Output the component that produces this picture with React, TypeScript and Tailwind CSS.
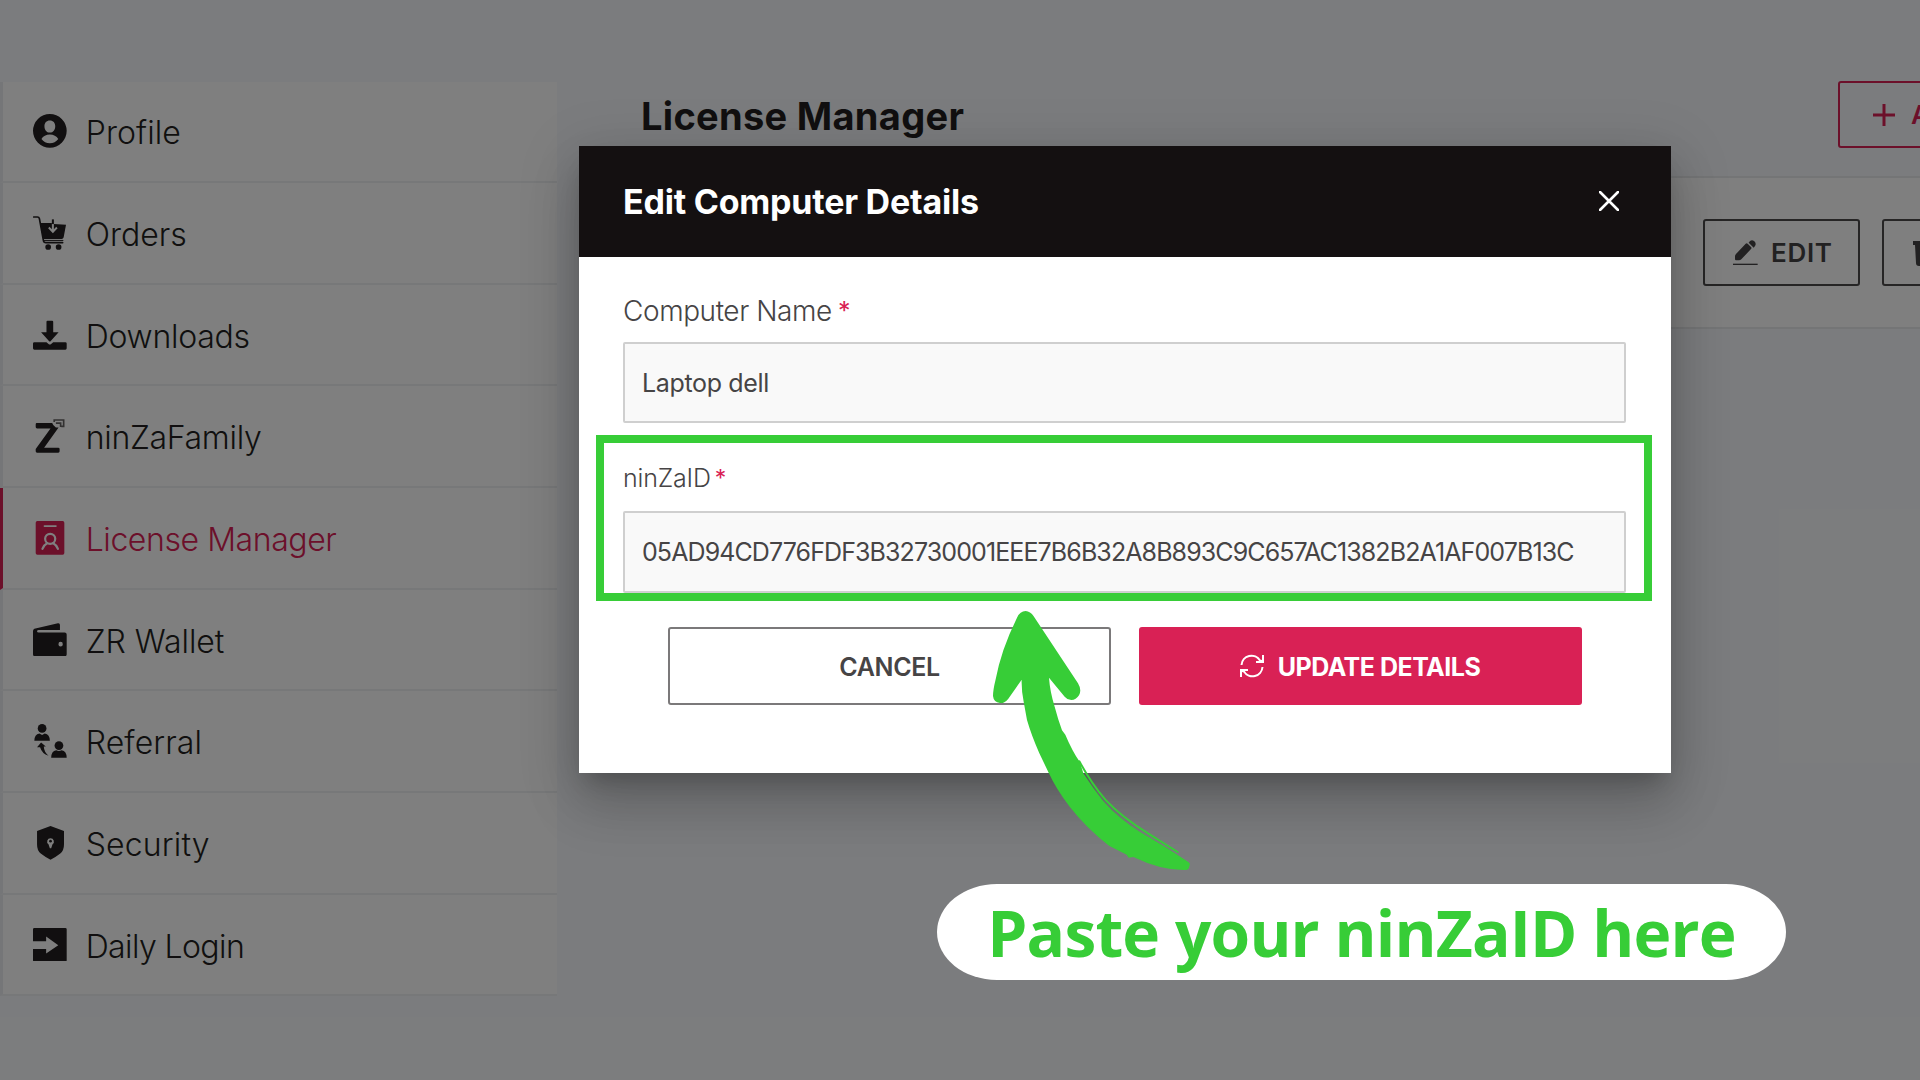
import React from "react";

type IconProps = { className?: string };

const ProfileIcon: React.FC<IconProps> = ({ className }) => (
  <svg viewBox="0 0 100 100" className={className} fill="currentColor">
    <path
      fillRule="evenodd"
      d="M50 0a50 50 0 1 0 0 100a50 50 0 0 0 0-100ZM50 19c10 0 16 7 16 17c0 10-6 19-16 19s-16-9-16-19c0-10 6-17 16-17ZM50 61c11 0 20 5 25 13c-6 8-15 13-25 13s-19-5-25-13c5-8 14-13 25-13Z"
    />
  </svg>
);

const OrdersIcon: React.FC<IconProps> = ({ className }) => (
  <svg viewBox="0 0 100 100" className={className} fill="currentColor">
    <path
      d="M2 3h11q5 0 6 5l12 65q1 6 7 6h50"
      fill="none"
      stroke="currentColor"
      strokeWidth="5"
      strokeLinecap="round"
    />
    <path
      fillRule="evenodd"
      d="M21 21h35v18l-7-7l-4 4l14 15l14-15l-4-4l-7 7V24l36 2l-7 37q-1 5-6 5H30Z"
    />
    <path d="M56 10h6v14h-6z" />
    <path d="M30 71h60v3H30z" />
    <circle cx="45" cy="92" r="8.500" />
    <circle cx="76" cy="92" r="8.500" />
  </svg>
);

const DownloadsIcon: React.FC<IconProps> = ({ className }) => (
  <svg viewBox="0 0 100 100" className={className} fill="currentColor">
    <path d="M43 8h14q3 0 3 3v31h16L52 69q-2 2-4 0L24 42h16V11q0-3 3-3Z" />
    <path d="M4 72h36l7 6q3 2 6 0l7-6h36q4 0 4 4v14q0 4-4 4H4q-4 0-4-4V76q0-4 4-4Z" />
  </svg>
);

const FamilyIcon: React.FC<IconProps> = ({ className }) => (
  <svg viewBox="0 0 100 100" className={className} fill="currentColor">
    <path d="M11 12h46q2 8 11 13h8L33 85h42q4 0 4 4v7q0 4-4 4H12q-4 0-4-4v-7L52 28H12q-4 0-4-4v-8q0-4 3-4Z" />
    <path
      d="M63 9V3h28v19h-7M68 12h14v12"
      fill="none"
      stroke="currentColor"
      strokeWidth="5"
      opacity="0.7"
    />
  </svg>
);

const LicenseIcon: React.FC<IconProps> = ({ className }) => (
  <svg viewBox="0 0 100 100" className={className}>
    <rect x="8" y="0" width="85" height="100" rx="5" fill="currentColor" />
    <g fill="none" stroke="#fff" strokeLinecap="round">
      <path d="M34 15h34" strokeWidth="5" />
      <circle cx="51" cy="53" r="15" strokeWidth="6.500" />
      <path d="M28 83q4-12 14-17M74 83q-4-12-14-17" strokeWidth="6.500" />
    </g>
  </svg>
);

const WalletIcon: React.FC<IconProps> = ({ className }) => (
  <svg viewBox="0 0 100 100" className={className} fill="currentColor">
    <path
      fillRule="evenodd"
      d="M4 17L74 1q6-1 6 5v15H17q-5 0-5 4q0 3 5 3h77q6 0 6 6v59q0 6-6 6H6q-6 0-6-6V24q0-5 4-7ZM82 56a6.500 7 0 1 0 0 14a6.500 7 0 0 0 0-14Z"
    />
  </svg>
);

const ReferralIcon: React.FC<IconProps> = ({ className }) => (
  <svg viewBox="0 0 100 100" className={className} fill="currentColor">
    <circle cx="27" cy="13" r="13" />
    <path d="M4 50q0-20 15-22l8 5l8-5q15 2 15 22Z" />
    <circle cx="77" cy="64" r="13" />
    <path d="M54 100q0-19 15-22q8 4 16 0q15 3 15 22Z" />
    <path d="M24 55l14 12h-6q1 17 14 27q-19-5-25-25H12Z" />
  </svg>
);

const SecurityIcon: React.FC<IconProps> = ({ className }) => (
  <svg viewBox="0 0 100 100" className={className} fill="currentColor">
    <path
      fillRule="evenodd"
      d="M52 0L92 15V55q0 18-11 27Q66 94 52 100Q38 94 23 82Q12 73 12 55V15ZM52 36a10 10 0 0 0-6 18l4 12h4l4-12a10 10 0 0 0-6-18Z"
    />
    <circle cx="52" cy="45" r="4" />
  </svg>
);

const LoginIcon: React.FC<IconProps> = ({ className }) => (
  <svg viewBox="0 0 100 100" className={className} fill="currentColor">
    <path d="M4 0h92q4 0 4 4v92q0 4-4 4H4q-4 0-4-4V62h39v14L75 51L39 25v14H0V4q0-4 4-4Z" />
  </svg>
);

const MENU = [
  { label: "Profile", Icon: ProfileIcon, text: "tracking-[0.1px]" },
  { label: "Orders", Icon: OrdersIcon, text: "tracking-[0px]" },
  { label: "Downloads", Icon: DownloadsIcon, text: "tracking-[-0.25px]" },
  { label: "ninZaFamily", Icon: FamilyIcon, text: "tracking-[-0.3px]" },
  { label: "License Manager", Icon: LicenseIcon, active: true, text: "tracking-[-0.42px]" },
  { label: "ZR Wallet", Icon: WalletIcon, text: "tracking-[-0.05px]" },
  { label: "Referral", Icon: ReferralIcon, text: "tracking-[0.1px]" },
  { label: "Security", Icon: SecurityIcon, text: "tracking-[0.15px]" },
  { label: "Daily Login", Icon: LoginIcon, text: "tracking-[-0.6px]" },
];

const Sidebar: React.FC = () => (
  <nav className="mt-[81.500px] w-[557px] shrink-0">
    {MENU.map(({ label, Icon, active, text }) => (
      <a
        key={label}
        className={`flex h-[101.67px] items-center border-b-2 border-b-[#eff1f3] border-l-[3px] bg-white pl-[30px] ${
          active ? "border-l-[#d92155] text-[#d92155]" : "border-l-[#ebedf0] text-[#231f20]"
        }`}
      >
        <Icon className="size-[33.7px] shrink-0" />
        <span className={`ml-[19px] pt-1 text-[32px] leading-none font-[350] whitespace-nowrap ${text}`}>
          {label}
        </span>
      </a>
    ))}
  </nav>
);

const Content: React.FC = () => (
  <section className="flex w-[1500px] shrink-0 flex-col pt-[81px] pl-[84px]">
    <div className="flex h-[67px] items-center">
      <h1 className="w-[1197px] shrink-0 pt-[3px] text-[38px] leading-none font-bold tracking-[0.3px] text-[#231f20]">
        License Manager
      </h1>
      <button className="flex h-full w-[300px] shrink-0 items-center gap-4 rounded-[3px] border-2 border-[#d92155] pl-[33px] text-[26px] leading-none font-semibold text-[#d92155]">
        <svg viewBox="0 0 22 22" className="size-[22px]" stroke="currentColor" strokeWidth="3">
          <path d="M11 0v22M0 11h22" />
        </svg>
        ADD
      </button>
    </div>
    <div className="mt-[28px] flex h-[153px] w-[1500px] items-center gap-[22px] border-y-2 border-[#e9ebed] bg-white pl-[1062px]">
      <button className="flex h-[67px] w-[157px] shrink-0 items-center rounded-[3px] border-2 border-[#4c4a4b] pl-[28px] text-[#454344]">
        <svg viewBox="0 0 75 75" className="size-[25px]" fill="currentColor">
          <path d="M9 42L38 11q3-3 6 0l10 10q3 3 0 6L25 58q-3 3-7 3h-9q-3 0-3-4v-8q0-4 3-7Z" />
          <path d="M47 8l4-5q6-5 12 0l3 3q4 6 0 12l-4 5Z" />
          <path d="M0 71h74v4H0z" />
        </svg>
        <span className="ml-[13px] pt-px text-[26px] leading-none font-semibold tracking-[0.7px]">EDIT</span>
      </button>
      <button className="flex h-[67px] w-[190px] shrink-0 items-center rounded-[3px] border-2 border-[#4c4a4b] pl-[29px] text-[#454344]">
        <svg viewBox="0 0 24 27" className="w-[24px]" fill="currentColor">
          <path d="M0 2h7V0h10v2h7v4h-2l-1 18q0 3-3 3H6q-3 0-3-3L2 6H0Z" />
        </svg>
      </button>
    </div>
  </section>
);

const EditDialog: React.FC = () => (
  <div
    role="dialog"
    className="absolute top-[145.500px] left-[579px] h-[627px] w-[1092px] bg-white text-[#464445] shadow-[0_15px_21px_-9px_rgba(0,0,0,0.2),0_33px_50px_2px_rgba(0,0,0,0.14),0_12px_54px_8px_rgba(0,0,0,0.12)]"
  >
    <header className="flex h-[111px] items-center justify-between bg-[#141011] pr-[52px] pl-[44px] text-white">
      <h2 className="pt-0.5 text-[34px] leading-none font-bold tracking-[-0.22px]">
        Edit Computer Details
      </h2>
      <svg viewBox="0 0 20 20" className="size-[20px]" stroke="currentColor" strokeWidth="2.600" strokeLinecap="round">
        <path d="M1 1l18 18M19 1L1 19" />
      </svg>
    </header>
    <div className="flex flex-col px-[44px] pt-[34px]">
      <label className="flex h-10 gap-1.5 text-[28px] leading-10 font-[360] tracking-[-0.42px]">
        Computer Name <span className="text-[25px] font-normal text-[#d92155]">*</span>
      </label>
      <div className="mt-[11px] mr-px flex h-[81px] items-center rounded-[2px] border-2 border-[#cfcfcf] bg-[#f9f9f9] pt-0.5 pl-[17px] text-[25px] leading-none font-[370] tracking-[-0.35px]">
        Laptop dell
      </div>
      <label className="mt-[35px] flex h-10 gap-1 text-[25px] leading-10 font-[360] tracking-[-0.2px]">
        ninZaID <span className="text-[23px] font-normal text-[#d92155]">*</span>
      </label>
      <div className="mt-[13px] mr-px flex h-[82.500px] items-center rounded-[2px] border-2 border-[#cfcfcf] bg-[#f9f9f9] pt-0.5 pl-[17px] text-[25px] leading-none font-[370] tracking-[-0.9px]">
        05AD94CD776FDF3B32730001EEE7B6B32A8B893C9C657AC1382B2A1AF007B13C
      </div>
      <div className="mt-[34px] flex gap-[27.500px] pl-[45px]">
        <button className="flex h-[78px] w-[443px] shrink-0 items-center justify-center rounded-[3px] border-2 border-[#7b797a] pt-0.5 text-[25px] leading-none font-semibold tracking-[-0.35px]">
          CANCEL
        </button>
        <button className="flex h-[78px] w-[443px] shrink-0 items-center justify-center gap-[14px] rounded-[3px] bg-[#d92155] text-[25px] leading-none font-bold tracking-[-0.5px] text-white">
          <svg viewBox="0 0 24 24" className="size-[24px]" fill="none" stroke="currentColor" strokeWidth="2">
            <path d="M1.500 11A10 10 0 0 1 20 6.500L23 7.500M23 1v7h-7M22.500 13A10 10 0 0 1 4 17.500L1 16.500M1 23v-7h7" />
          </svg>
          <span className="pt-0.5">UPDATE DETAILS</span>
        </button>
      </div>
    </div>
  </div>
);

const Arrow: React.FC = () => (
  <svg viewBox="0 0 900 900" className="absolute top-[590px] left-[920px] size-[300px]" fill="#37cd37">
    <path d="M291 83Q300 63 317 63Q331 64 341 79L474 280Q486 300 477 316Q468 330 454 330Q441 329 434 320L387 263Q390 305 404 350Q414 388 426 421L436 434Q456 482 480 517L490 550Q520 597 550 634Q595 685 660 726Q740 772 806 817Q812 822 808 828Q807 840 797 840Q725 842 640 801L626 803L620 794L567 767Q500 715 449 650Q408 596 386 548L358 490Q334 435 321 390L311 335Q304 300 305 269L265 326Q253 341 240 339Q221 337 219 318Q219 300 226 272Q243 180 291 83Z" />
    <path
      d="M478 514Q514 580 556 629Q605 682 690 734L773 786"
      fill="none"
      stroke="#37cd37"
      strokeWidth="6"
      strokeLinecap="round"
    />
  </svg>
);

export default function App() {
  return (
    <main className="relative flex h-[1080px] w-[1920px] overflow-hidden bg-[#f7f9fc] font-['Inter',sans-serif]">
      <Sidebar />
      <Content />

      {/* Backdrop */}
      <div className="absolute inset-0 bg-black/50" />
      <EditDialog />

      {/* Callout */}
      <div className="absolute top-[435px] left-[596px] h-[166px] w-[1056px] border-8 border-[#37cd37]" />
      <Arrow />
      <div className="absolute top-[884px] left-[937px] flex h-[96px] w-[849px] items-center justify-center rounded-[60px_/_48px] bg-white pt-0.5 font-['Open_Sans',sans-serif] text-[64px] leading-none font-bold tracking-[-0.85px] whitespace-nowrap text-[#37cd37]">
        Paste your ninZaID here
      </div>
    </main>
  );
}
